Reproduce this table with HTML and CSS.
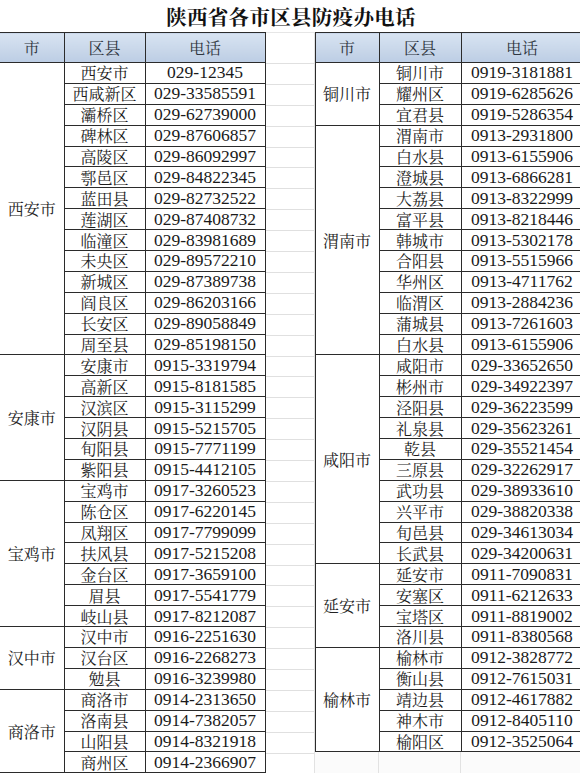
FILE: index.html
```html
<!DOCTYPE html>
<html lang="zh-CN">
<head>
<meta charset="utf-8">
<title>陕西省各市区县防疫办电话</title>
<link rel="stylesheet" href="styles.css">
</head>
<body>
<div class="title">陕西省各市区县防疫办电话</div>
<div class="sheet">
  <table class="tbl tbl-left">
    <colgroup><col class="c-city"><col class="c-dist"><col class="c-tel"></colgroup>
    <thead><tr><th class="first">市</th><th>区县</th><th>电话</th></tr></thead>
    <tbody>
      <tr><td class="city first" rowspan="14">西安市</td><td>西安市</td><td class="tel">029-12345</td></tr>
      <tr><td>西咸新区</td><td class="tel">029-33585591</td></tr>
      <tr><td>灞桥区</td><td class="tel">029-62739000</td></tr>
      <tr><td>碑林区</td><td class="tel">029-87606857</td></tr>
      <tr><td>高陵区</td><td class="tel">029-86092997</td></tr>
      <tr><td>鄠邑区</td><td class="tel">029-84822345</td></tr>
      <tr><td>蓝田县</td><td class="tel">029-82732522</td></tr>
      <tr><td>莲湖区</td><td class="tel">029-87408732</td></tr>
      <tr><td>临潼区</td><td class="tel">029-83981689</td></tr>
      <tr><td>未央区</td><td class="tel">029-89572210</td></tr>
      <tr><td>新城区</td><td class="tel">029-87389738</td></tr>
      <tr><td>阎良区</td><td class="tel">029-86203166</td></tr>
      <tr><td>长安区</td><td class="tel">029-89058849</td></tr>
      <tr><td>周至县</td><td class="tel">029-85198150</td></tr>
      <tr><td class="city first" rowspan="6">安康市</td><td>安康市</td><td class="tel">0915-3319794</td></tr>
      <tr><td>高新区</td><td class="tel">0915-8181585</td></tr>
      <tr><td>汉滨区</td><td class="tel">0915-3115299</td></tr>
      <tr><td>汉阴县</td><td class="tel">0915-5215705</td></tr>
      <tr><td>旬阳县</td><td class="tel">0915-7771199</td></tr>
      <tr><td>紫阳县</td><td class="tel">0915-4412105</td></tr>
      <tr><td class="city first" rowspan="7">宝鸡市</td><td>宝鸡市</td><td class="tel">0917-3260523</td></tr>
      <tr><td>陈仓区</td><td class="tel">0917-6220145</td></tr>
      <tr><td>凤翔区</td><td class="tel">0917-7799099</td></tr>
      <tr><td>扶风县</td><td class="tel">0917-5215208</td></tr>
      <tr><td>金台区</td><td class="tel">0917-3659100</td></tr>
      <tr><td>眉县</td><td class="tel">0917-5541779</td></tr>
      <tr><td>岐山县</td><td class="tel">0917-8212087</td></tr>
      <tr><td class="city first" rowspan="3">汉中市</td><td>汉中市</td><td class="tel">0916-2251630</td></tr>
      <tr><td>汉台区</td><td class="tel">0916-2268273</td></tr>
      <tr><td>勉县</td><td class="tel">0916-3239980</td></tr>
      <tr><td class="city first" rowspan="4">商洛市</td><td>商洛市</td><td class="tel">0914-2313650</td></tr>
      <tr><td>洛南县</td><td class="tel">0914-7382057</td></tr>
      <tr><td>山阳县</td><td class="tel">0914-8321918</td></tr>
      <tr><td>商州区</td><td class="tel">0914-2366907</td></tr>
    </tbody>
  </table>
  <div class="gap">
    <div class="gap-head"></div>
    <div class="gap-body"></div>
  </div>
  <div class="right">
    <table class="tbl tbl-right">
      <colgroup><col class="c-city"><col class="c-dist"><col class="c-tel"></colgroup>
      <thead><tr><th>市</th><th>区县</th><th>电话</th></tr></thead>
      <tbody>
        <tr><td class="city" rowspan="3">铜川市</td><td>铜川市</td><td class="tel">0919-3181881</td></tr>
        <tr><td>耀州区</td><td class="tel">0919-6285626</td></tr>
        <tr><td>宜君县</td><td class="tel">0919-5286354</td></tr>
        <tr><td class="city" rowspan="11">渭南市</td><td>渭南市</td><td class="tel">0913-2931800</td></tr>
        <tr><td>白水县</td><td class="tel">0913-6155906</td></tr>
        <tr><td>澄城县</td><td class="tel">0913-6866281</td></tr>
        <tr><td>大荔县</td><td class="tel">0913-8322999</td></tr>
        <tr><td>富平县</td><td class="tel">0913-8218446</td></tr>
        <tr><td>韩城市</td><td class="tel">0913-5302178</td></tr>
        <tr><td>合阳县</td><td class="tel">0913-5515966</td></tr>
        <tr><td>华州区</td><td class="tel">0913-4711762</td></tr>
        <tr><td>临渭区</td><td class="tel">0913-2884236</td></tr>
        <tr><td>蒲城县</td><td class="tel">0913-7261603</td></tr>
        <tr><td>白水县</td><td class="tel">0913-6155906</td></tr>
        <tr><td class="city" rowspan="10">咸阳市</td><td>咸阳市</td><td class="tel">029-33652650</td></tr>
        <tr><td>彬州市</td><td class="tel">029-34922397</td></tr>
        <tr><td>泾阳县</td><td class="tel">029-36223599</td></tr>
        <tr><td>礼泉县</td><td class="tel">029-35623261</td></tr>
        <tr><td>乾县</td><td class="tel">029-35521454</td></tr>
        <tr><td>三原县</td><td class="tel">029-32262917</td></tr>
        <tr><td>武功县</td><td class="tel">029-38933610</td></tr>
        <tr><td>兴平市</td><td class="tel">029-38820338</td></tr>
        <tr><td>旬邑县</td><td class="tel">029-34613034</td></tr>
        <tr><td>长武县</td><td class="tel">029-34200631</td></tr>
        <tr><td class="city" rowspan="4">延安市</td><td>延安市</td><td class="tel">0911-7090831</td></tr>
        <tr><td>安塞区</td><td class="tel">0911-6212633</td></tr>
        <tr><td>宝塔区</td><td class="tel">0911-8819002</td></tr>
        <tr><td>洛川县</td><td class="tel">0911-8380568</td></tr>
        <tr><td class="city" rowspan="5">榆林市</td><td>榆林市</td><td class="tel">0912-3828772</td></tr>
        <tr><td>衡山县</td><td class="tel">0912-7615031</td></tr>
        <tr><td>靖边县</td><td class="tel">0912-4617882</td></tr>
        <tr><td>神木市</td><td class="tel">0912-8405110</td></tr>
        <tr><td>榆阳区</td><td class="tel">0912-3525064</td></tr>
      </tbody>
    </table>
    <div class="blank-row">
      <div class="blank-cell c1"></div>
      <div class="blank-cell c2"></div>
      <div class="blank-cell c3"></div>
    </div>
  </div>
</div>
</body>
</html>
```

FILE: styles.css
```css
html, body {
  margin: 0;
  padding: 0;
  background: #ffffff;
}
body {
  width: 580px;
  height: 773px;
  overflow: hidden;
  color: #1c1c1c;
  font-family: "Noto Serif CJK SC", "Noto Sans CJK SC", sans-serif;
}
.title {
  height: 32px;
  line-height: 32px;
  text-align: center;
  font-size: 20.5px;
  font-weight: bold;
  color: #111;
  padding-left: 2px;
  letter-spacing: 0.3px;
}
.sheet {
  display: flex;
  align-items: flex-start;
  width: 600px;
}
.tbl {
  border-collapse: collapse;
  table-layout: fixed;
  flex: none;
}
.tbl th,
.tbl td {
  border: 1px solid #2b2b2b;
  padding: 0;
  text-align: center;
  vertical-align: middle;
  white-space: nowrap;
  overflow: hidden;
}
.tbl th {
  height: 29px;
  font-weight: normal;
  font-size: 16px;
  line-height: 20px;
  color: #2f3640;
  background: linear-gradient(#d8e3f1, #bccde4);
}
.tbl td {
  height: 19.9px;
  font-size: 16px;
  line-height: 19px;
}
.tbl td.tel {
  font-family: "Liberation Serif", "Times New Roman", serif;
  font-size: 17.5px;
  color: #1a1a1a;
}
.tbl td.city {
  color: #222;
}
.tbl .first {
  border-left: none;
}
.tbl-left {
  width: 265px;
}
.tbl-left .c-city { width: 64px; }
.tbl-left .c-dist { width: 81px; }
.tbl-left .c-tel { width: 120px; }

.gap {
  flex: none;
  width: 49px;
  box-sizing: border-box;
  border-right: 1px solid #e2e2e2;
}
.gap-head {
  height: 30px;
  border-top: 1px solid #e6e6e6;
}
.gap-body {
  height: 711px;
  background-image: repeating-linear-gradient(to bottom, transparent 0, transparent 19.9px, #e0e0e0 19.9px, #e0e0e0 20.9px);
  border-top: 1px solid #e0e0e0;
}

.right {
  flex: none;
  display: flex;
  flex-direction: column;
}
.tbl-right {
  width: 268px;
}
.tbl-right .c-city { width: 64px; }
.tbl-right .c-dist { width: 82px; }
.tbl-right .c-tel { width: 122px; }

.blank-row {
  display: flex;
  height: 22px;
}
.blank-cell {
  box-sizing: border-box;
  border-right: 1px solid #e2e2e2;
  border-bottom: 1px solid #e2e2e2;
  background: #fbfbfb;
}
.blank-cell.c1 { width: 64px; }
.blank-cell.c2 { width: 82px; }
.blank-cell.c3 { width: 122px; }
```
